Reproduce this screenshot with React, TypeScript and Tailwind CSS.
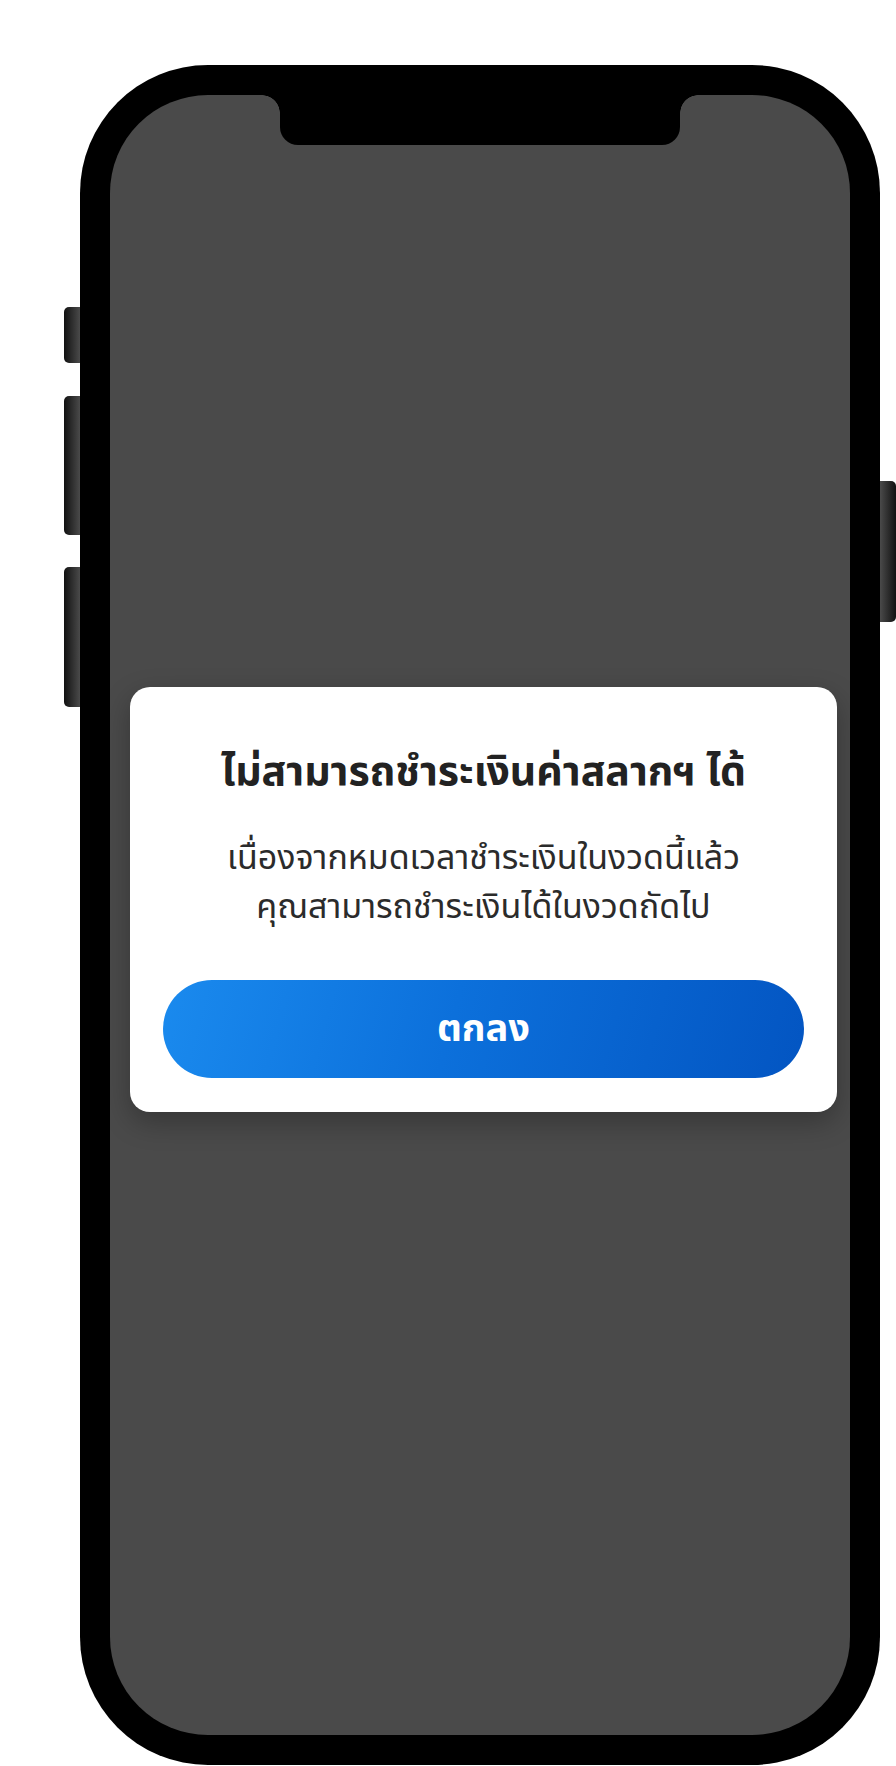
import React from "react";

const thai = { fontFamily: '"Noto Sans Thai", "Noto Sans Thai UI", "Noto Sans", "Liberation Sans", sans-serif' };

export default function App() {
  return (
    <div className="min-h-[1766px] w-[896px] bg-white">
      <div className="flex pl-[64px] pt-[65px]">
        {/* left side buttons */}
        <div className="flex w-[16px] flex-col pt-[242px]">
          <div className="h-[56px] w-[16px] rounded-l-[5px] bg-[linear-gradient(to_right,#111,#4a4a4a)]" />
          <div className="mt-[33px] h-[139px] w-[16px] rounded-l-[5px] bg-[linear-gradient(to_right,#111,#4a4a4a)]" />
          <div className="mt-[32px] h-[140px] w-[16px] rounded-l-[5px] bg-[linear-gradient(to_right,#111,#4a4a4a)]" />
        </div>

        {/* phone */}
        <div className="h-[1700px] w-[800px] rounded-[128px] bg-black p-[30px]">
          <div className="relative flex h-full w-full flex-col overflow-hidden rounded-[98px] bg-[#4a4a4a]">
            {/* notch */}
            <div className="absolute left-[152px] top-0 h-[18px] w-[18px] bg-[radial-gradient(circle_at_0%_100%,#4a4a4a_17.5px,#000_18px)]" />
            <div className="absolute left-[170px] top-0 h-[50px] w-[400px] rounded-b-[18px] bg-black" />
            <div className="absolute left-[570px] top-0 h-[18px] w-[18px] bg-[radial-gradient(circle_at_100%_100%,#4a4a4a_17.5px,#000_18px)]" />

            {/* dialog */}
            <div
              className="ml-[20px] mt-[592px] flex w-[707px] flex-col items-center rounded-[20px] bg-white px-[33px] pb-[34px] pt-[57px] shadow-[0_10px_28px_rgba(0,0,0,0.28)]"
              style={thai}
            >
              <h1 className="whitespace-nowrap text-center text-[41px] font-bold leading-[56px] text-[#222]">
                ไม่สามารถชำระเงินค่าสลากฯ ได้
              </h1>
              <p className="mt-[34px] whitespace-nowrap text-center text-[34px] leading-[49px] text-[#2b2b2b]">
                เนื่องจากหมดเวลาชำระเงินในงวดนี้แล้ว
                <br />
                คุณสามารถชำระเงินได้ในงวดถัดไป
              </p>
              <button className="mt-[48px] flex h-[98px] w-full items-center justify-center rounded-full bg-[linear-gradient(105deg,#1a8aee_0%,#0c70db_45%,#0355c2_100%)] text-[38px] font-bold text-white">
                ตกลง
              </button>
            </div>
          </div>
        </div>

        {/* right side button */}
        <div className="flex w-[16px] flex-col pt-[416px]">
          <div className="h-[141px] w-[16px] rounded-r-[5px] bg-[linear-gradient(to_left,#111,#4a4a4a)]" />
        </div>
      </div>
    </div>
  );
}
